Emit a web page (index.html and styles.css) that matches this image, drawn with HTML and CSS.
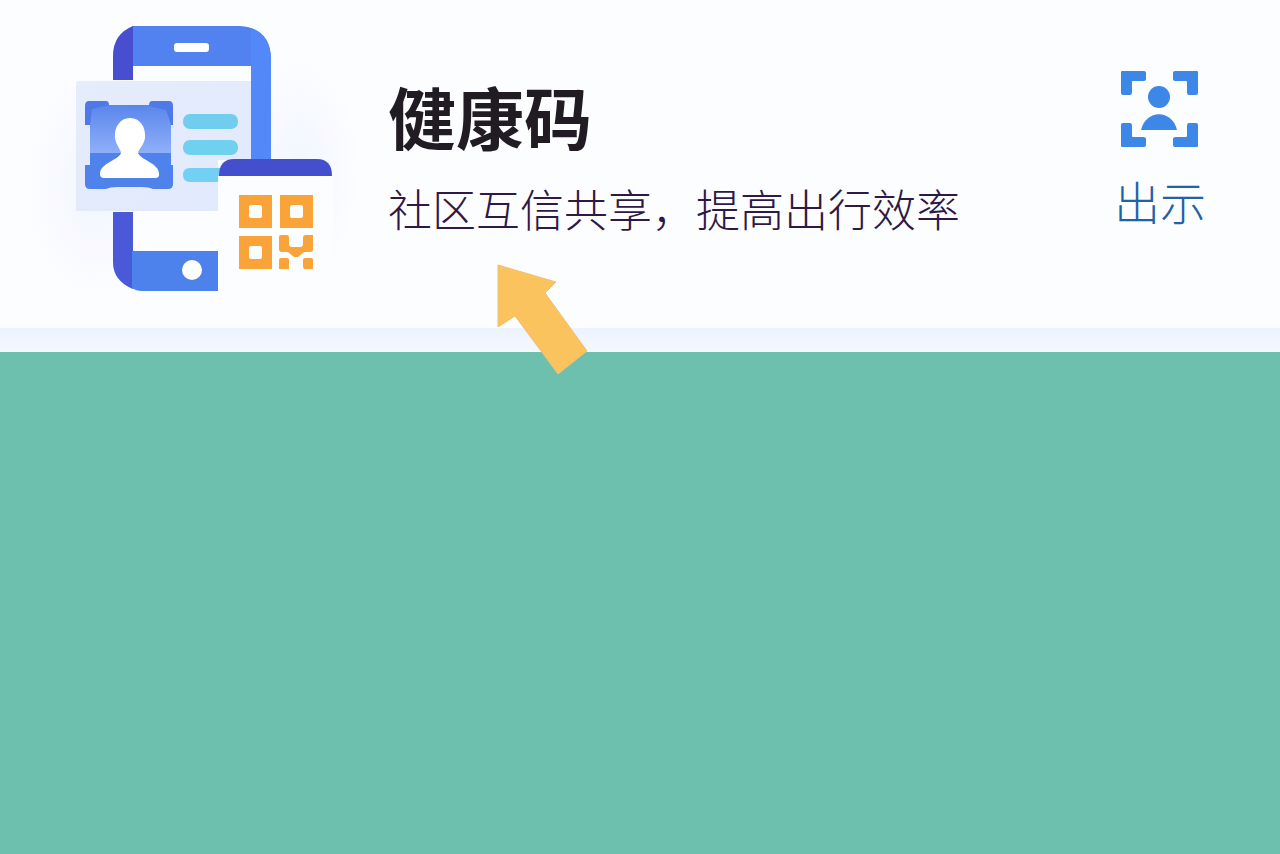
FILE: index.html
```html
<!DOCTYPE html>
<html lang="zh-CN">
<head>
<meta charset="utf-8">
<meta name="viewport" content="width=device-width, initial-scale=1">
<title>健康码</title>
<link rel="stylesheet" href="styles.css">
</head>
<body>
<main class="page">
  <section class="card">
    <svg class="art" viewBox="20 10 340 300" aria-hidden="true">
      <defs>
        <linearGradient id="photo" x1="0" y1="0" x2="0" y2="1">
          <stop offset="0" stop-color="#5a86ec"/>
          <stop offset="1" stop-color="#90b0f9"/>
        </linearGradient>
        <linearGradient id="idcard" x1="0" y1="0" x2="1" y2="1">
          <stop offset="0" stop-color="#e5ecfb"/>
          <stop offset="1" stop-color="#e1e9fd"/>
        </linearGradient>
        <radialGradient id="glow">
          <stop offset="0" stop-color="#f1f6ff"/>
          <stop offset="1" stop-color="#f1f6ff" stop-opacity="0"/>
        </radialGradient>
      </defs>
      <ellipse cx="95" cy="185" rx="75" ry="120" fill="url(#glow)"/>
      <ellipse cx="300" cy="170" rx="60" ry="120" fill="url(#glow)"/>
      <path d="M132 64H252V252H132Z" fill="#fcfdff"/>
      <path d="M132 26H240Q270 28 271 58V160H251V66H132Z" fill="#5282ef"/>
      <path d="M251 28Q270 36 271 58V160H251Z" fill="#5388f8"/>
      <path d="M133 26Q113 34 113 56V80H133Z" fill="#474fd0"/>
      <rect x="174" y="43" width="35" height="9" rx="3" fill="#fff"/>
      <path d="M113 212H133V289Q113 281 113 262Z" fill="#4959d8"/>
      <path d="M132 251H218V291H142Q136 291 132 288Z" fill="#4d82ed"/>
      <circle cx="192" cy="270" r="10" fill="#fff"/>
      <path d="M79 81H251V160H218V211H76V84Q76 81 79 81Z" fill="url(#idcard)"/>
      <rect x="90" y="105" width="81" height="49" fill="url(#photo)"/>
      <path d="M90 153H171V165H173V184Q173 189 168 189H153Q149 187 142 187H117Q110 187 106 189H90Q85 189 85 184V165H90Z" fill="#4f83eb"/>
      <path d="M89 101H106Q109 101 109 105L92 109L90 125H85V106Q85 101 89 101ZM152 101H169Q173 101 173 106V125H171Q168 114 166 110L149 106Q149 101 152 101Z" fill="#4f78e8"/>
      <path d="M130 118C120 118 114 127 115 138C116 145 121 150 121 153C119 160 100 163 100 174Q100 178 104 178H155Q160 178 159 173C158 163 141 160 138 153C138 150 144 145 145 138C146 127 140 118 130 118Z" fill="#fff"/>
      <rect x="183" y="114" width="55" height="15" rx="7" fill="#70cdf0"/>
      <rect x="183" y="140" width="55" height="15" rx="7" fill="#70d0ef"/>
      <path d="M190 168H220V182H190Q183 182 183 175Q183 168 190 168Z" fill="#72d0f4"/>
      <path d="M218 176H333V280H218Z" fill="#fcfdff"/>
      <path d="M219 176Q219 159 234 159H317Q332 159 332 176Z" fill="#444fcd"/>
      <path fill="#f9a339" fill-rule="evenodd" d="M239 195H272V228H239ZM251 205Q249 205 249 207V216Q249 218 251 218H260Q262 218 262 216V207Q262 205 260 205ZM280 195H313V228H280ZM292 205Q290 205 290 207V216Q290 218 292 218H301Q303 218 303 216V207Q303 205 301 205ZM239 236H272V269H239ZM251 246Q249 246 249 248V257Q249 259 251 259H260Q262 259 262 257V248Q262 246 260 246Z"/>
      <path fill="#f9a339" d="M281 235H287Q289 235 289 238V244Q289 247 292 247H300Q303 247 303 244V238Q303 235 306 235H313V249Q313 252 310 252H304L298 257H294L288 252H282Q279 252 279 249V237Q279 235 281 235ZM281 258H287Q289 258 289 260V269H279V260Q279 258 281 258ZM305 258H311Q313 258 313 260V269H305Q303 269 303 266V260Q303 258 305 258Z"/>
    </svg>
    <div class="copy">
      <h1 class="title">健康码</h1>
      <p class="subtitle">社区互信共享，提高出行效率</p>
    </div>
    <button class="show" type="button">
      <svg class="scan" viewBox="0 0 78 78" aria-hidden="true">
        <g fill="#3c87e8">
          <path id="corner" d="M1 1H23Q25 1 25 3V9Q25 11 22 11H12Q11 11 11 12V22Q11 25 9 25H2Q0 25 0 23V2Q0 1 1 1Z"/>
          <use href="#corner" transform="matrix(-1 0 0 1 77 0)"/>
          <use href="#corner" transform="matrix(1 0 0 -1 0 78)"/>
          <use href="#corner" transform="matrix(-1 0 0 -1 77 78)"/>
          <circle cx="38" cy="27" r="11"/>
          <path d="M20 60C25 39 51 39 56 60Z"/>
        </g>
      </svg>
      <span class="show-label">出示</span>
    </button>
    <svg class="arrow" viewBox="0 0 92 112" aria-hidden="true">
      <path d="M2 1L60 18L49 29L91 87L62 110L19 52L2 63Z" fill="#fbc35d" stroke="#edc174" stroke-width="1"/>
    </svg>
  </section>
  <div class="divider"></div>
</main>
</body>
</html>
```
FILE: styles.css
```css
* {
  box-sizing: border-box;
}

body {
  margin: 0;
  font-family: "Noto Sans CJK SC", sans-serif;
  background: #6dbfae;
}

.page {
  min-height: 100vh;
}

.card {
  position: relative;
  display: flex;
  align-items: flex-start;
  padding: 10px 64px 18px 20px;
  background: #fcfdff;
}

.art {
  flex: none;
  width: 340px;
  height: 300px;
}

.copy {
  padding: 58px 0 0 28px;
}

.title {
  margin: 0;
  font-size: 68px;
  line-height: 96px;
  font-weight: 700;
  color: #211c24;
}

.subtitle {
  margin: 12px 0 0;
  font-size: 44px;
  line-height: 64px;
  font-weight: 300;
  color: #2e1845;
}

.show {
  display: flex;
  flex-direction: column;
  align-items: center;
  gap: 20px;
  margin: 60px 0 0 auto;
  padding: 0 10px;
  border: 0;
  background: none;
  font: inherit;
  color: #1f62a8;
  cursor: pointer;
}

.scan {
  width: 78px;
  height: 78px;
}

.show-label {
  font-size: 46px;
  line-height: 64px;
  font-weight: 300;
}

.arrow {
  position: absolute;
  left: 496px;
  top: 264px;
  width: 92px;
  height: 112px;
}

.divider {
  height: 24px;
  background: linear-gradient(#ecf3fe, #f4f8ff);
}
```
